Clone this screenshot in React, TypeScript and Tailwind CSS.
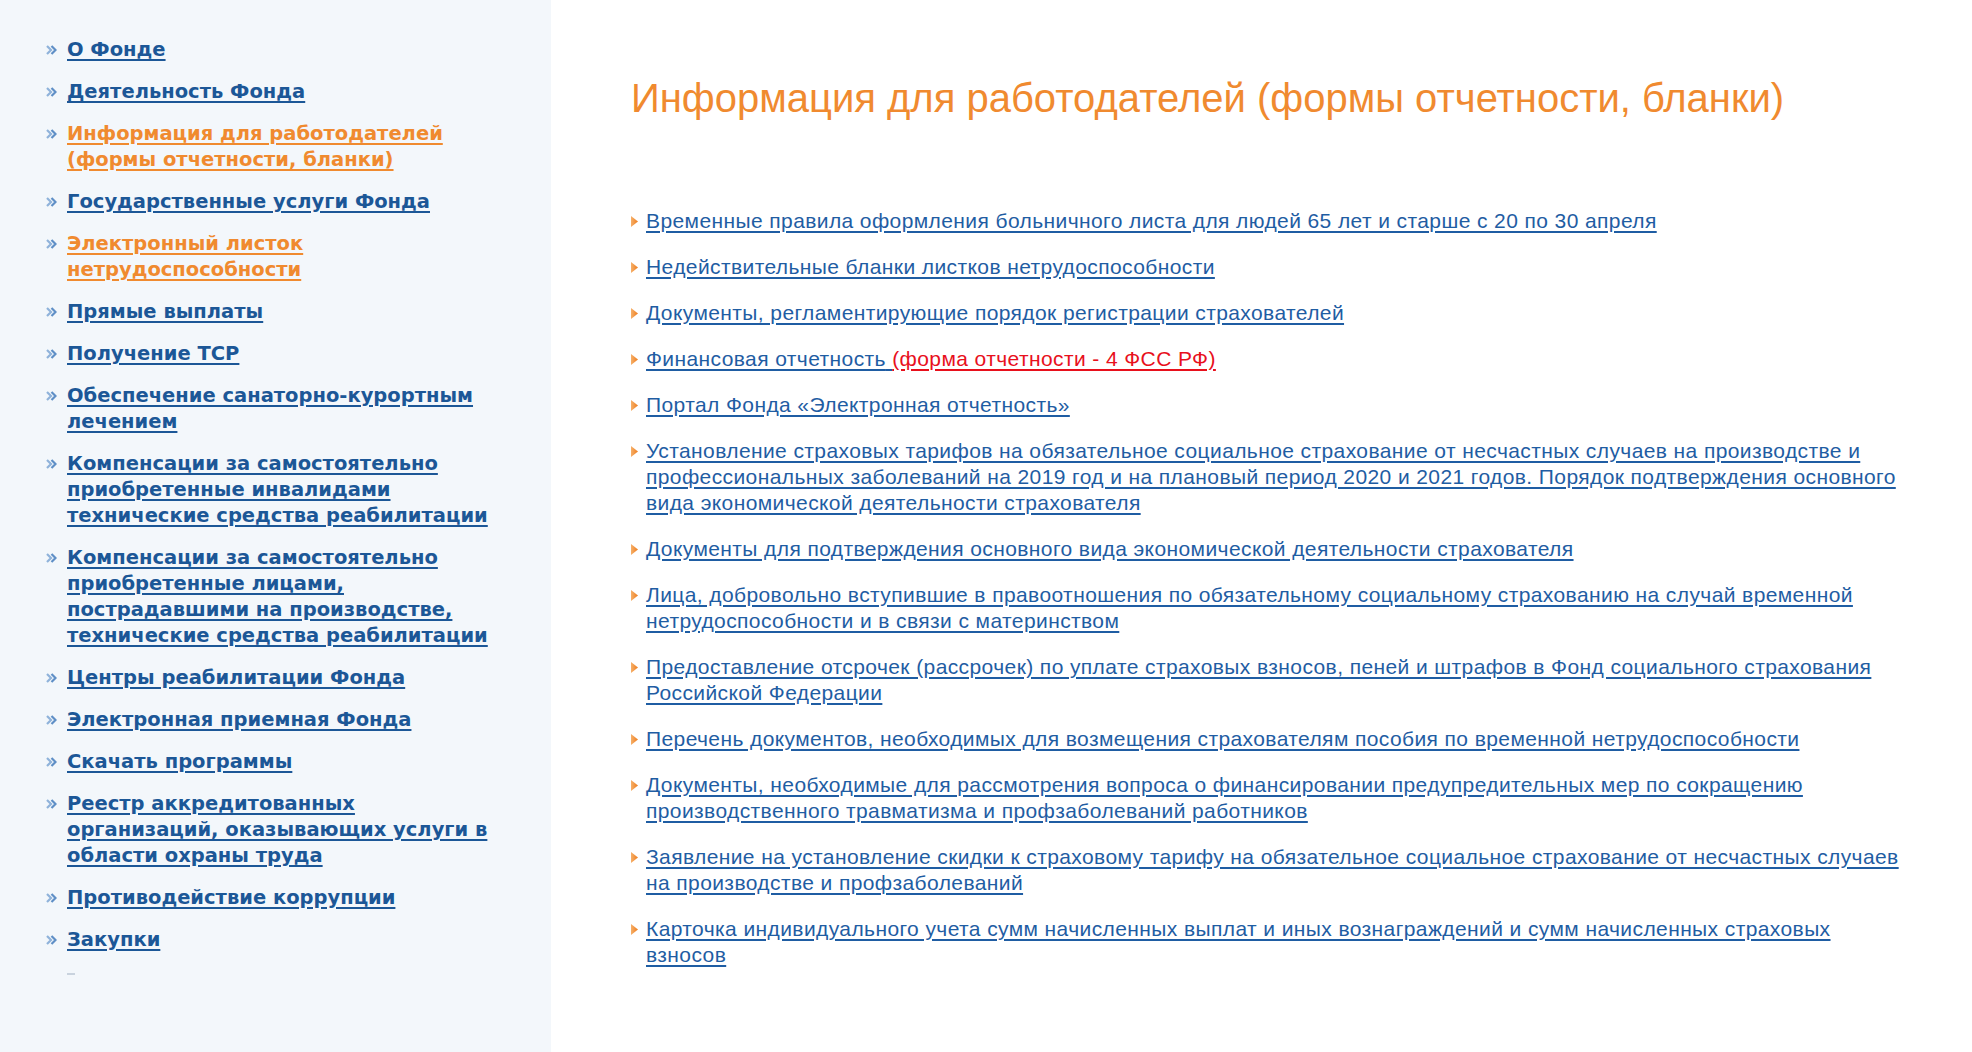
import React from 'react';

type NavItem = { label: string; active?: boolean };

const navItems: NavItem[] = [
  { label: 'О Фонде' },
  { label: 'Деятельность Фонда' },
  { label: 'Информация для работодателей (формы отчетности, бланки)', active: true },
  { label: 'Государственные услуги Фонда' },
  { label: 'Электронный листок нетрудоспособности', active: true },
  { label: 'Прямые выплаты' },
  { label: 'Получение ТСР' },
  { label: 'Обеспечение санаторно-курортным лечением' },
  { label: 'Компенсации за самостоятельно приобретенные инвалидами технические средства реабилитации' },
  { label: 'Компенсации за самостоятельно приобретенные лицами, пострадавшими на производстве, технические средства реабилитации' },
  { label: 'Центры реабилитации Фонда' },
  { label: 'Электронная приемная Фонда' },
  { label: 'Скачать программы' },
  { label: 'Реестр аккредитованных организаций, оказывающих услуги в области охраны труда' },
  { label: 'Противодействие коррупции' },
  { label: 'Закупки' },
];

const docs: string[] = [
  'Временные правила оформления больничного листа для людей 65 лет и старше с 20 по 30 апреля',
  'Недействительные бланки листков нетрудоспособности',
  'Документы, регламентирующие порядок регистрации страхователей',
  '__FIN__',
  'Портал Фонда «Электронная отчетность»',
  'Установление страховых тарифов на обязательное социальное страхование от несчастных случаев на производстве и профессиональных заболеваний на 2019 год и на плановый период 2020 и 2021 годов. Порядок подтверждения основного вида экономической деятельности страхователя',
  'Документы для подтверждения основного вида экономической деятельности страхователя',
  'Лица, добровольно вступившие в правоотношения по обязательному социальному страхованию на случай временной нетрудоспособности и в связи с материнством',
  'Предоставление отсрочек (рассрочек) по уплате страховых взносов, пеней и штрафов в Фонд социального страхования Российской Федерации',
  'Перечень документов, необходимых для возмещения страхователям пособия по временной нетрудоспособности',
  'Документы, необходимые для рассмотрения вопроса о финансировании предупредительных мер по сокращению производственного травматизма и профзаболеваний работников',
  'Заявление на установление скидки к страховому тарифу на обязательное социальное страхование от несчастных случаев на производстве и профзаболеваний',
  'Карточка индивидуального учета сумм начисленных выплат и иных вознаграждений и сумм начисленных страховых взносов',
];

const NavBullet = () => (
  <svg width="11" height="10" viewBox="0 0 11 10" className="shrink-0 mt-[8px]">
    <path d="M1 1 L5 5 L1 9" fill="none" stroke="#8fb2da" strokeWidth="2.2" />
    <path d="M5.5 1 L9.5 5 L5.5 9" fill="none" stroke="#5f8fc6" strokeWidth="2.2" />
  </svg>
);

const DocBullet = () => (
  <svg width="7" height="11" viewBox="0 0 7 11" className="shrink-0 mt-[8px]">
    <defs>
      <linearGradient id="tri" x1="0" y1="0" x2="1" y2="0">
        <stop offset="0" stopColor="#f6b06a" />
        <stop offset="1" stopColor="#ee7d1e" />
      </linearGradient>
    </defs>
    <polygon points="0,0 7,5.5 0,11" fill="url(#tri)" />
  </svg>
);

export default function App() {
  return (
    <div className="flex min-h-screen bg-white" style={{ fontFamily: 'Tahoma, "DejaVu Sans", sans-serif' }}>
      <aside className="w-[551px] shrink-0 bg-[#f3f7fb] pt-[37px] pl-[46px] pr-[50px]">
        <ul className="flex flex-col gap-[16px]">
          {navItems.map((item) => (
            <li key={item.label} className="flex gap-[10px]">
              <NavBullet />
              <a
                href="#"
                className={`text-[19.5px] leading-[26px] font-bold underline underline-offset-[3px] decoration-[2px] ${
                  item.active ? 'text-[#f08a2f]' : 'text-[#1c5797]'
                }`}
              >
                {item.label}
              </a>
            </li>
          ))}
          <li className="pl-[21px]">
            <div className="w-[8px] h-[2px] bg-[#c9d3de] mt-[4px]" />
          </li>
        </ul>
      </aside>

      <main className="flex-1 pl-[80px] pr-[58px] pt-[74px]" style={{ fontFamily: '"Liberation Sans", Arial, sans-serif' }}>
        <h1 className="text-[40px] leading-[48px] font-normal text-[#f08a2f]">
          Информация для работодателей (формы отчетности, бланки)
        </h1>
        <ul className="mt-[86px] flex flex-col gap-[20px]">
          {docs.map((d) => (
            <li key={d} className="flex gap-[8px]">
              <DocBullet />
              {d === '__FIN__' ? (
                <span className="text-[21px] leading-[26px] tracking-[0.4px]">
                  <a href="#" className="text-[#1f5da3] underline underline-offset-[3px]">
                    Финансовая отчетность{' '}
                  </a>
                  <a href="#" className="text-[#e8101c] underline underline-offset-[3px]">
                    (форма отчетности - 4 ФСС РФ)
                  </a>
                </span>
              ) : (
                <a href="#" className="text-[21px] leading-[26px] tracking-[0.4px] text-[#1f5da3] underline underline-offset-[3px]">
                  {d}
                </a>
              )}
            </li>
          ))}
        </ul>
      </main>
    </div>
  );
}
